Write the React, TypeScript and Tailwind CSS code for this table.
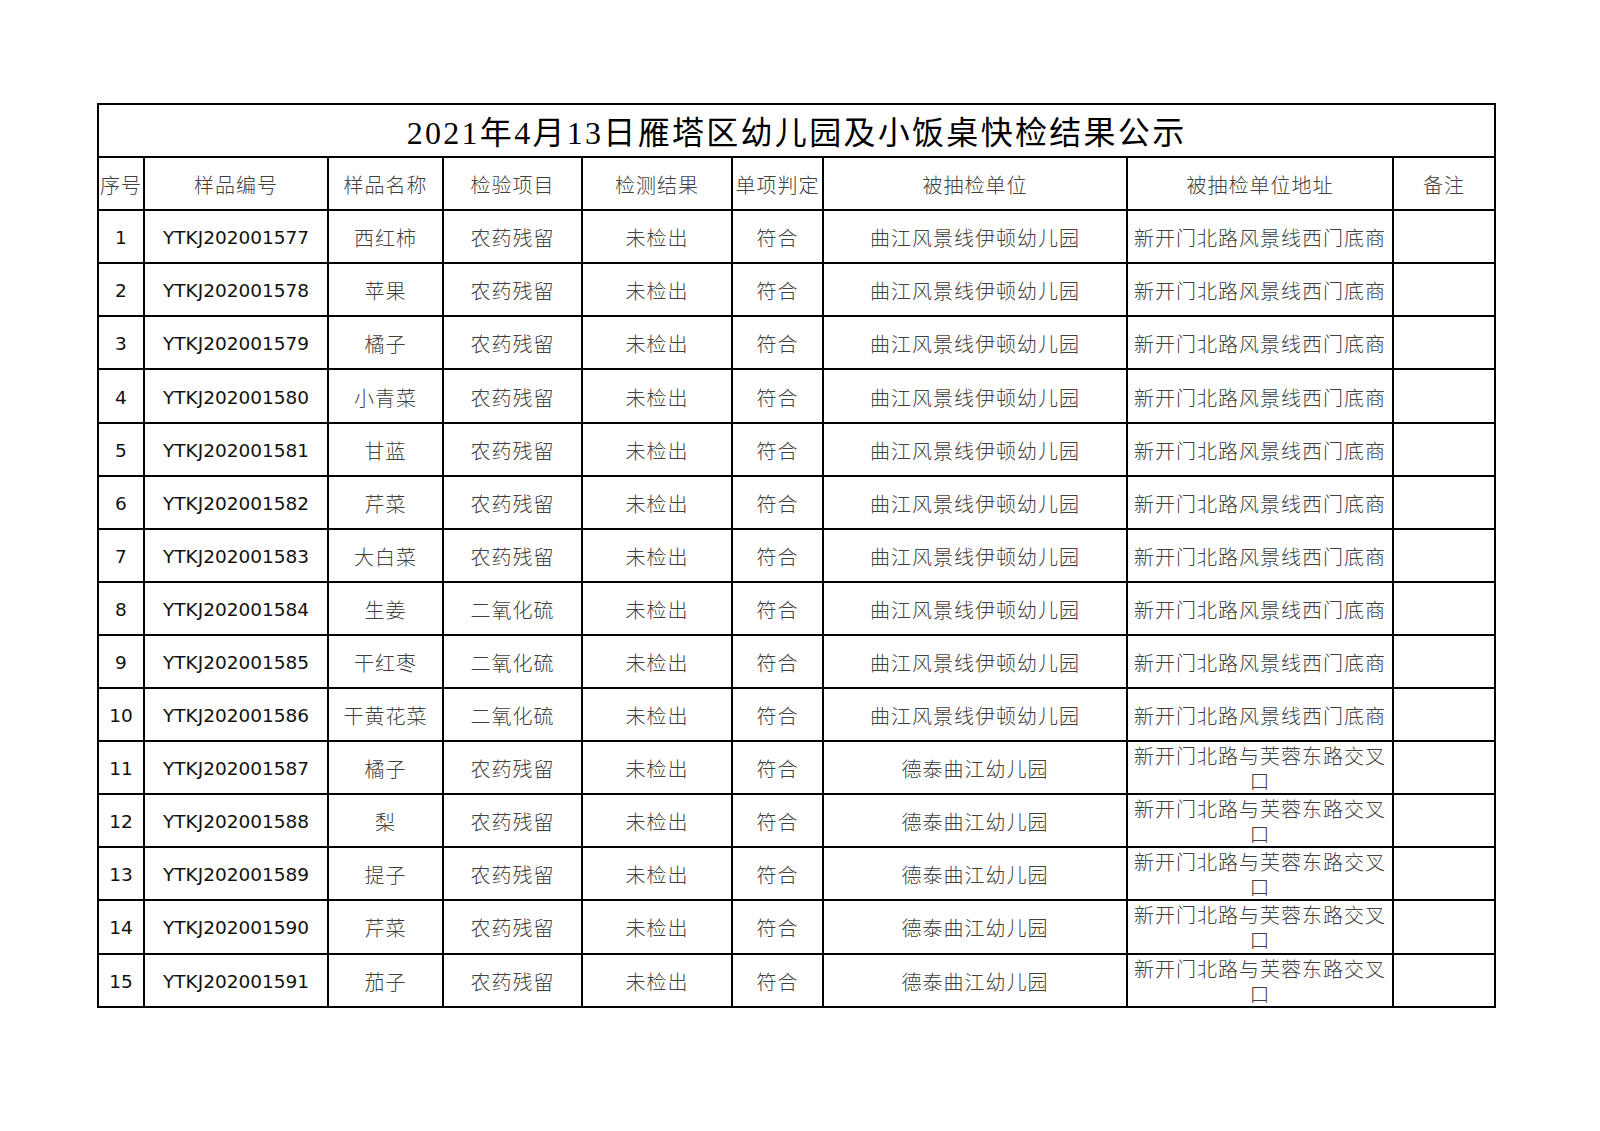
import React from "react";

type Row = { id: string; name: string; item: string; unit: string; addr: string };

const rows: Row[] = [
  { id: "YTKJ202001577", name: "西红柿", item: "农药残留", unit: "曲江风景线伊顿幼儿园", addr: "新开门北路风景线西门底商" },
  { id: "YTKJ202001578", name: "苹果", item: "农药残留", unit: "曲江风景线伊顿幼儿园", addr: "新开门北路风景线西门底商" },
  { id: "YTKJ202001579", name: "橘子", item: "农药残留", unit: "曲江风景线伊顿幼儿园", addr: "新开门北路风景线西门底商" },
  { id: "YTKJ202001580", name: "小青菜", item: "农药残留", unit: "曲江风景线伊顿幼儿园", addr: "新开门北路风景线西门底商" },
  { id: "YTKJ202001581", name: "甘蓝", item: "农药残留", unit: "曲江风景线伊顿幼儿园", addr: "新开门北路风景线西门底商" },
  { id: "YTKJ202001582", name: "芹菜", item: "农药残留", unit: "曲江风景线伊顿幼儿园", addr: "新开门北路风景线西门底商" },
  { id: "YTKJ202001583", name: "大白菜", item: "农药残留", unit: "曲江风景线伊顿幼儿园", addr: "新开门北路风景线西门底商" },
  { id: "YTKJ202001584", name: "生姜", item: "二氧化硫", unit: "曲江风景线伊顿幼儿园", addr: "新开门北路风景线西门底商" },
  { id: "YTKJ202001585", name: "干红枣", item: "二氧化硫", unit: "曲江风景线伊顿幼儿园", addr: "新开门北路风景线西门底商" },
  { id: "YTKJ202001586", name: "干黄花菜", item: "二氧化硫", unit: "曲江风景线伊顿幼儿园", addr: "新开门北路风景线西门底商" },
  { id: "YTKJ202001587", name: "橘子", item: "农药残留", unit: "德泰曲江幼儿园", addr: "新开门北路与芙蓉东路交叉口" },
  { id: "YTKJ202001588", name: "梨", item: "农药残留", unit: "德泰曲江幼儿园", addr: "新开门北路与芙蓉东路交叉口" },
  { id: "YTKJ202001589", name: "提子", item: "农药残留", unit: "德泰曲江幼儿园", addr: "新开门北路与芙蓉东路交叉口" },
  { id: "YTKJ202001590", name: "芹菜", item: "农药残留", unit: "德泰曲江幼儿园", addr: "新开门北路与芙蓉东路交叉口" },
  { id: "YTKJ202001591", name: "茄子", item: "农药残留", unit: "德泰曲江幼儿园", addr: "新开门北路与芙蓉东路交叉口" },
];

const headers = ["序号", "样品编号", "样品名称", "检验项目", "检测结果", "单项判定", "被抽检单位", "被抽检单位地址", "备注"];

const cjk = "font-['Noto_Sans_CJK_SC',sans-serif] font-light text-[20px] tracking-[1px] text-[#404040]";
const latin = "font-['DejaVu_Sans',sans-serif] font-normal text-[18.5px] text-[#111]";
const base = "border-2 border-black text-center align-middle px-0 pb-0 h-[53.1px]";
const cell = `${base} pt-[3px] leading-[26px]`;
// wrapped address cells: tighter lines so the row keeps its height
const wrapCell = `${base} pt-[1px] leading-[25px]`;

export default function App() {
  return (
    <div className="min-h-[1131px] w-[1600px] bg-white pt-[103px] pl-[97px]">
      <table className="table-fixed border-collapse border-2 border-black w-[1397px]">
        <colgroup>
          <col className="w-[46px]" />
          <col className="w-[184px]" />
          <col className="w-[115px]" />
          <col className="w-[139px]" />
          <col className="w-[150px]" />
          <col className="w-[91px]" />
          <col className="w-[304px]" />
          <col className="w-[266px]" />
          <col className="w-[102px]" />
        </colgroup>
        <thead>
          <tr>
            <th
              colSpan={9}
              className="border-2 border-black h-[53.1px] px-0 pt-[5px] pb-0 text-center align-middle font-normal text-[32px] leading-[36px] tracking-[2.3px] text-black font-['Liberation_Serif','Noto_Sans_CJK_SC',serif]"
            >
              2021年4月13日雁塔区幼儿园及小饭桌快检结果公示
            </th>
          </tr>
          <tr>
            {headers.map((h) => (
              <th key={h} className={`${cell} ${cjk} whitespace-nowrap tracking-[0px]`}>
                {h}
              </th>
            ))}
          </tr>
        </thead>
        <tbody>
          {rows.map((r, i) => (
            <tr key={r.id}>
              <td className={`${cell} ${latin}`}>{i + 1}</td>
              <td className={`${cell} ${latin}`}>{r.id}</td>
              <td className={`${cell} ${cjk}`}>{r.name}</td>
              <td className={`${cell} ${cjk}`}>{r.item}</td>
              <td className={`${cell} ${cjk}`}>未检出</td>
              <td className={`${cell} ${cjk}`}>符合</td>
              <td className={`${cell} ${cjk}`}>{r.unit}</td>
              <td className={`${r.addr.length > 12 ? wrapCell : cell} ${cjk}`}>{r.addr}</td>
              <td className={cell}></td>
            </tr>
          ))}
        </tbody>
      </table>
    </div>
  );
}
